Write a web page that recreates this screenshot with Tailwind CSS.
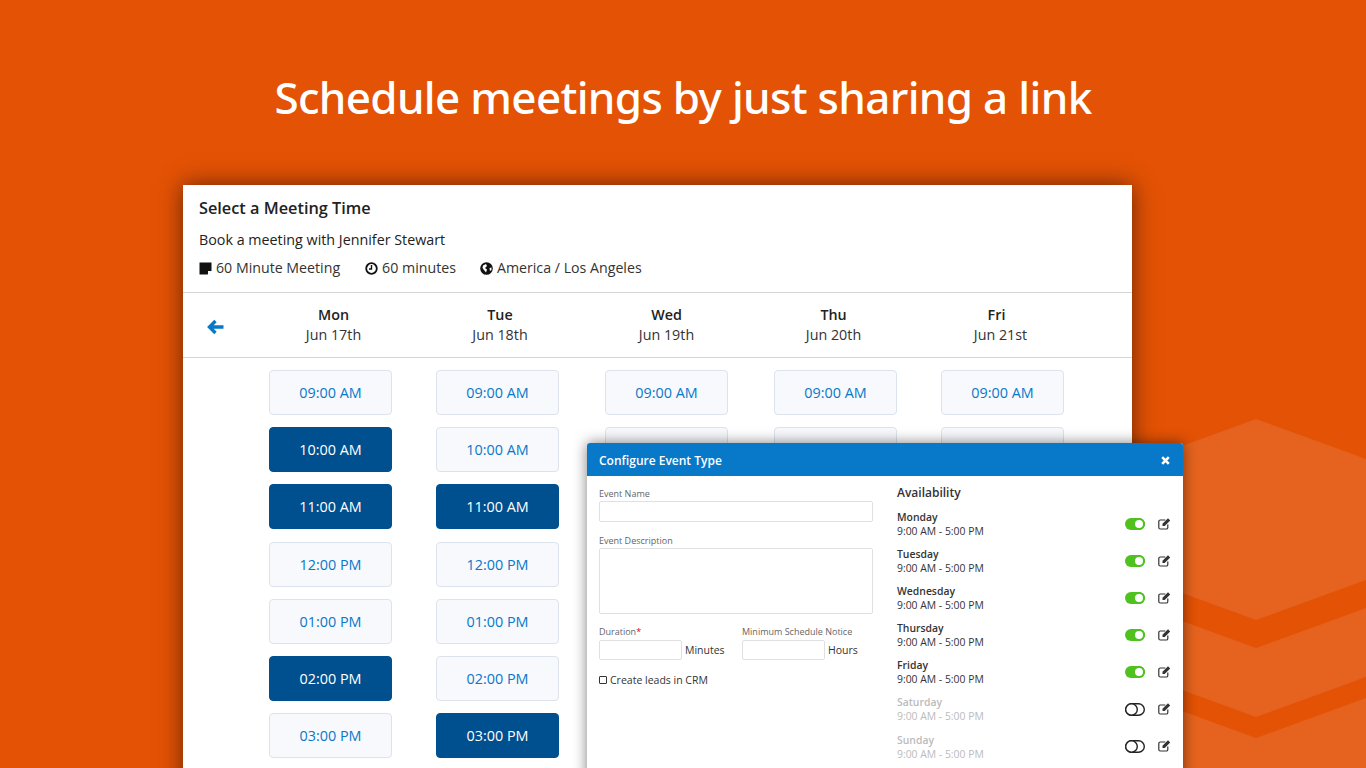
<!DOCTYPE html>
<html lang="en">
<head>
    <meta charset="UTF-8">
    <title>Schedule meetings</title>
    <script src="https://cdn.jsdelivr.net/npm/@tailwindcss/browser@4"></script>
</head>
<body class="bg-[#e35205] font-['Open_Sans',sans-serif] text-[#222]">
<div class="relative w-[1366px] h-[768px] overflow-hidden">
    <!-- background shapes -->
    <svg class="absolute left-0 top-0" width="1366" height="768" viewBox="0 0 1366 768" fill="#ffffff" fill-opacity="0.1">
        <polygon points="1130,465 1256,419 1366,459 1366,580 1256,620 1130,574"/>
        <polygon points="1130,602 1256,648 1366,608 1366,677 1256,717 1130,671"/>
        <polygon points="1130,692 1256,738 1366,698 1366,768 1130,768"/>
    </svg>

    <h1 class="relative pt-[65px] h-[185px] text-center text-white text-[44px] leading-[64px] font-medium font-['Noto_Sans',sans-serif] tracking-[-0.68px]">Schedule meetings by just sharing a link</h1>

    <!-- booking card -->
    <div class="relative ml-[183px] w-[949px] h-[640px] bg-white shadow-[0_0_22px_rgba(0,0,0,0.55)]">
        <div class="h-[108px] border-b border-[#d5d5d5] px-4 pt-[11px]">
            <div class="text-[16.300px] leading-[24px] font-semibold">Select a Meeting Time</div>
            <div class="mt-[9px] text-[14.300px] leading-[22px]">Book a meeting with Jennifer Stewart</div>
            <div class="mt-[6px] flex items-center text-[14.200px] leading-[22px] text-[#333]">
                <svg class="mr-[4px]" width="13" height="13" viewBox="0 0 13 13"><path d="M0.500 0.500h12v8l-4 4h-8z" fill="#111"/><path d="M9 12.500v-3.500h3.500z" fill="#fff"/></svg>
                <span>60 Minute Meeting</span>
                <svg class="ml-[25px] mr-[4px]" width="13" height="13" viewBox="0 0 13 13" fill="none" stroke="#111"><circle cx="6.500" cy="6.500" r="5.300" stroke-width="1.800"/><path d="M6.500 3v4h-2.500" stroke-width="1.400"/></svg>
                <span>60 minutes</span>
                <svg class="ml-[24px] mr-[4px]" width="13" height="13" viewBox="0 0 13 13"><circle cx="6.500" cy="6.500" r="6.300" fill="#111"/><path d="M3 3.500l3 -1.500 1 2 -2 2 2 1.500 -1 3 -2 -2.500 -1.500 -2z" fill="#fff"/><path d="M9.500 6l2 -0.500 0 2.500 -1.500 1z" fill="#fff"/></svg>
                <span>America / Los Angeles</span>
            </div>
        </div>
        <div class="h-[65px] border-b border-[#d5d5d5] flex items-center relative">
            <svg class="absolute left-[24px] top-[26px]" width="17" height="16" viewBox="0 0 17 16" fill="none" stroke="#0878c9" stroke-width="3.400"><path d="M8.500 2l-6 6 6 6M3 8h13.500"/></svg>
            <div class="ml-[67px] grid grid-cols-[167px_166px_167px_167px_167px] text-center text-[14.300px] leading-[20px]">
                <div><div class="font-semibold">Mon</div><div class="text-[#333]">Jun 17th</div></div>
                <div><div class="font-semibold">Tue</div><div class="text-[#333]">Jun 18th</div></div>
                <div><div class="font-semibold">Wed</div><div class="text-[#333]">Jun 19th</div></div>
                <div><div class="font-semibold">Thu</div><div class="text-[#333]">Jun 20th</div></div>
                <div><div class="font-semibold pr-[8px]">Fri</div><div class="text-[#333]">Jun 21st</div></div>
            </div>
        </div>
        <div class="ml-[86px] pt-[12px] grid grid-cols-[167px_169px_169px_167px_123px] gap-y-[12.200px] text-[14.400px] font-medium text-center">
            <div class="w-[123px] h-[45px] leading-[43px] rounded border border-[#dde3ec] bg-[#f7f9fd] text-[#0878c9]">09:00 AM</div>
            <div class="w-[123px] h-[45px] leading-[43px] rounded border border-[#dde3ec] bg-[#f7f9fd] text-[#0878c9]">09:00 AM</div>
            <div class="w-[123px] h-[45px] leading-[43px] rounded border border-[#dde3ec] bg-[#f7f9fd] text-[#0878c9]">09:00 AM</div>
            <div class="w-[123px] h-[45px] leading-[43px] rounded border border-[#dde3ec] bg-[#f7f9fd] text-[#0878c9]">09:00 AM</div>
            <div class="w-[123px] h-[45px] leading-[43px] rounded border border-[#dde3ec] bg-[#f7f9fd] text-[#0878c9]">09:00 AM</div>

            <div class="w-[123px] h-[45px] leading-[43px] rounded border border-[#00508f] bg-[#00508f] text-white">10:00 AM</div>
            <div class="w-[123px] h-[45px] leading-[43px] rounded border border-[#dde3ec] bg-[#f7f9fd] text-[#0878c9]">10:00 AM</div>
            <div class="w-[123px] h-[45px] border border-[#dde3ec] rounded bg-[#f7f9fd]"></div>
            <div class="w-[123px] h-[45px] border border-[#dde3ec] rounded bg-[#f7f9fd]"></div>
            <div class="w-[123px] h-[45px] border border-[#dde3ec] rounded bg-[#f7f9fd]"></div>

            <div class="w-[123px] h-[45px] leading-[43px] rounded border border-[#00508f] bg-[#00508f] text-white">11:00 AM</div>
            <div class="w-[123px] h-[45px] leading-[43px] rounded border border-[#00508f] bg-[#00508f] text-white">11:00 AM</div>
            <div class="col-span-3"></div>

            <div class="w-[123px] h-[45px] leading-[43px] rounded border border-[#dde3ec] bg-[#f7f9fd] text-[#0878c9]">12:00 PM</div>
            <div class="w-[123px] h-[45px] leading-[43px] rounded border border-[#dde3ec] bg-[#f7f9fd] text-[#0878c9]">12:00 PM</div>
            <div class="col-span-3"></div>

            <div class="w-[123px] h-[45px] leading-[43px] rounded border border-[#dde3ec] bg-[#f7f9fd] text-[#0878c9]">01:00 PM</div>
            <div class="w-[123px] h-[45px] leading-[43px] rounded border border-[#dde3ec] bg-[#f7f9fd] text-[#0878c9]">01:00 PM</div>
            <div class="col-span-3"></div>

            <div class="w-[123px] h-[45px] leading-[43px] rounded border border-[#00508f] bg-[#00508f] text-white">02:00 PM</div>
            <div class="w-[123px] h-[45px] leading-[43px] rounded border border-[#dde3ec] bg-[#f7f9fd] text-[#0878c9]">02:00 PM</div>
            <div class="col-span-3"></div>

            <div class="w-[123px] h-[45px] leading-[43px] rounded border border-[#dde3ec] bg-[#f7f9fd] text-[#0878c9]">03:00 PM</div>
            <div class="w-[123px] h-[45px] leading-[43px] rounded border border-[#00508f] bg-[#00508f] text-white">03:00 PM</div>
        </div>
    </div>

    <!-- configure modal -->
    <div class="absolute left-[587px] top-[443px] w-[596px] h-[340px] bg-white rounded-t-[3px] shadow-[0_0_14px_rgba(0,0,0,0.5)]">
        <div class="h-[33px] bg-[#0878c9] rounded-t-[3px] flex items-center justify-between pt-[2px] pl-[12px] pr-[13px] text-white">
            <span class="text-[12px] font-semibold">Configure Event Type</span>
            <svg width="9" height="9" viewBox="0 0 9 9" stroke="#fff" stroke-width="2.600"><path d="M1.200 1.200l6.600 6.600M7.800 1.200l-6.600 6.600"/></svg>
        </div>
        <div class="flex">
            <div class="w-[310px] pl-[12px] pt-[12px] text-[9px] leading-[12px] text-[#666]">
                <div>Event Name</div>
                <div class="mt-[1px] w-[274px] h-[21px] border border-[#e0e0e0] rounded-[2px]"></div>
                <div class="mt-[13px]">Event Description</div>
                <div class="mt-[1px] w-[274px] h-[66px] border border-[#e0e0e0] rounded-[2px]"></div>
                <div class="mt-[12px] flex">
                    <div class="w-[143px]">
                        <div>Duration<span class="text-[#d0021b]">*</span></div>
                        <div class="mt-[2px] flex items-center">
                            <div class="w-[83px] h-[20px] border border-[#e0e0e0] rounded-[2px]"></div>
                            <span class="ml-[3px] text-[10.500px] text-[#333]">Minutes</span>
                        </div>
                    </div>
                    <div>
                        <div>Minimum Schedule Notice</div>
                        <div class="mt-[2px] flex items-center">
                            <div class="w-[83px] h-[20px] border border-[#e0e0e0] rounded-[2px]"></div>
                            <span class="ml-[3px] text-[10.500px] text-[#333]">Hours</span>
                        </div>
                    </div>
                </div>
                <div class="mt-[14px] flex items-center text-[10.500px] text-[#333]">
                    <span class="w-[8px] h-[8px] border border-[#333] rounded-[1px] mr-[3px]"></span>Create leads in CRM
                </div>
            </div>
            <div class="flex-1 pt-[9px] pr-[12px]">
                <div class="text-[12px] leading-[16px] font-semibold text-[#333]">Availability</div>
                <div class="mt-[9px] flex flex-col gap-[9.100px] text-[10.400px] leading-[14px]">
                    <div class="flex items-center h-[28px]">
                        <div class="flex-1"><div class="font-semibold text-[#333]">Monday</div><div class="text-[#333]">9:00 AM - 5:00 PM</div></div>
                        <div class="w-[20px] h-[12px] rounded-full bg-[#4fc21f] flex justify-end mr-[13px]"><div class="w-[12px] h-[12px] rounded-full bg-white border-2 border-[#4fc21f]"></div></div>
                        <svg class="mb-[2px]" width="13" height="13" viewBox="0 0 13 13" fill="none"><path d="M9.800 7.500v3a1.500 1.500 0 0 1 -1.500 1.500h-6a1.500 1.500 0 0 1 -1.500 -1.500v-6a1.500 1.500 0 0 1 1.500 -1.500h5" stroke="#333" stroke-width="1.200"/><path d="M4.500 6.800l5.500 -5.500 2.200 2.200 -5.500 5.500h-2.200z" fill="#333"/></svg>
                    </div>
                    <div class="flex items-center h-[28px]">
                        <div class="flex-1"><div class="font-semibold text-[#333]">Tuesday</div><div class="text-[#333]">9:00 AM - 5:00 PM</div></div>
                        <div class="w-[20px] h-[12px] rounded-full bg-[#4fc21f] flex justify-end mr-[13px]"><div class="w-[12px] h-[12px] rounded-full bg-white border-2 border-[#4fc21f]"></div></div>
                        <svg class="mb-[2px]" width="13" height="13" viewBox="0 0 13 13" fill="none"><path d="M9.800 7.500v3a1.500 1.500 0 0 1 -1.500 1.500h-6a1.500 1.500 0 0 1 -1.500 -1.500v-6a1.500 1.500 0 0 1 1.500 -1.500h5" stroke="#333" stroke-width="1.200"/><path d="M4.500 6.800l5.500 -5.500 2.200 2.200 -5.500 5.500h-2.200z" fill="#333"/></svg>
                    </div>
                    <div class="flex items-center h-[28px]">
                        <div class="flex-1"><div class="font-semibold text-[#333]">Wednesday</div><div class="text-[#333]">9:00 AM - 5:00 PM</div></div>
                        <div class="w-[20px] h-[12px] rounded-full bg-[#4fc21f] flex justify-end mr-[13px]"><div class="w-[12px] h-[12px] rounded-full bg-white border-2 border-[#4fc21f]"></div></div>
                        <svg class="mb-[2px]" width="13" height="13" viewBox="0 0 13 13" fill="none"><path d="M9.800 7.500v3a1.500 1.500 0 0 1 -1.500 1.500h-6a1.500 1.500 0 0 1 -1.500 -1.500v-6a1.500 1.500 0 0 1 1.500 -1.500h5" stroke="#333" stroke-width="1.200"/><path d="M4.500 6.800l5.500 -5.500 2.200 2.200 -5.500 5.500h-2.200z" fill="#333"/></svg>
                    </div>
                    <div class="flex items-center h-[28px]">
                        <div class="flex-1"><div class="font-semibold text-[#333]">Thursday</div><div class="text-[#333]">9:00 AM - 5:00 PM</div></div>
                        <div class="w-[20px] h-[12px] rounded-full bg-[#4fc21f] flex justify-end mr-[13px]"><div class="w-[12px] h-[12px] rounded-full bg-white border-2 border-[#4fc21f]"></div></div>
                        <svg class="mb-[2px]" width="13" height="13" viewBox="0 0 13 13" fill="none"><path d="M9.800 7.500v3a1.500 1.500 0 0 1 -1.500 1.500h-6a1.500 1.500 0 0 1 -1.500 -1.500v-6a1.500 1.500 0 0 1 1.500 -1.500h5" stroke="#333" stroke-width="1.200"/><path d="M4.500 6.800l5.500 -5.500 2.200 2.200 -5.500 5.500h-2.200z" fill="#333"/></svg>
                    </div>
                    <div class="flex items-center h-[28px]">
                        <div class="flex-1"><div class="font-semibold text-[#333]">Friday</div><div class="text-[#333]">9:00 AM - 5:00 PM</div></div>
                        <div class="w-[20px] h-[12px] rounded-full bg-[#4fc21f] flex justify-end mr-[13px]"><div class="w-[12px] h-[12px] rounded-full bg-white border-2 border-[#4fc21f]"></div></div>
                        <svg class="mb-[2px]" width="13" height="13" viewBox="0 0 13 13" fill="none"><path d="M9.800 7.500v3a1.500 1.500 0 0 1 -1.500 1.500h-6a1.500 1.500 0 0 1 -1.500 -1.500v-6a1.500 1.500 0 0 1 1.500 -1.500h5" stroke="#333" stroke-width="1.200"/><path d="M4.500 6.800l5.500 -5.500 2.200 2.200 -5.500 5.500h-2.200z" fill="#333"/></svg>
                    </div>
                    <div class="flex items-center h-[28px]">
                        <div class="flex-1 text-[#bbb]"><div class="font-semibold">Saturday</div><div>9:00 AM - 5:00 PM</div></div>
                        <svg class="mr-[13px]" width="20" height="13" viewBox="0 0 20 13" fill="#fff" stroke="#222" stroke-width="1.400"><rect x="0.700" y="0.700" width="18.600" height="11.600" rx="5.800"/><circle cx="6.500" cy="6.500" r="5.800"/></svg>
                        <svg class="mb-[2px]" width="13" height="13" viewBox="0 0 13 13" fill="none"><path d="M9.800 7.500v3a1.500 1.500 0 0 1 -1.500 1.500h-6a1.500 1.500 0 0 1 -1.500 -1.500v-6a1.500 1.500 0 0 1 1.500 -1.500h5" stroke="#333" stroke-width="1.200"/><path d="M4.500 6.800l5.500 -5.500 2.200 2.200 -5.500 5.500h-2.200z" fill="#333"/></svg>
                    </div>
                    <div class="flex items-center h-[28px]">
                        <div class="flex-1 text-[#bbb]"><div class="font-semibold">Sunday</div><div>9:00 AM - 5:00 PM</div></div>
                        <svg class="mr-[13px]" width="20" height="13" viewBox="0 0 20 13" fill="#fff" stroke="#222" stroke-width="1.400"><rect x="0.700" y="0.700" width="18.600" height="11.600" rx="5.800"/><circle cx="6.500" cy="6.500" r="5.800"/></svg>
                        <svg class="mb-[2px]" width="13" height="13" viewBox="0 0 13 13" fill="none"><path d="M9.800 7.500v3a1.500 1.500 0 0 1 -1.500 1.500h-6a1.500 1.500 0 0 1 -1.500 -1.500v-6a1.500 1.500 0 0 1 1.500 -1.500h5" stroke="#333" stroke-width="1.200"/><path d="M4.500 6.800l5.500 -5.500 2.200 2.200 -5.500 5.500h-2.200z" fill="#333"/></svg>
                    </div>
                </div>
            </div>
        </div>
    </div>
</div>
</body>
</html>
